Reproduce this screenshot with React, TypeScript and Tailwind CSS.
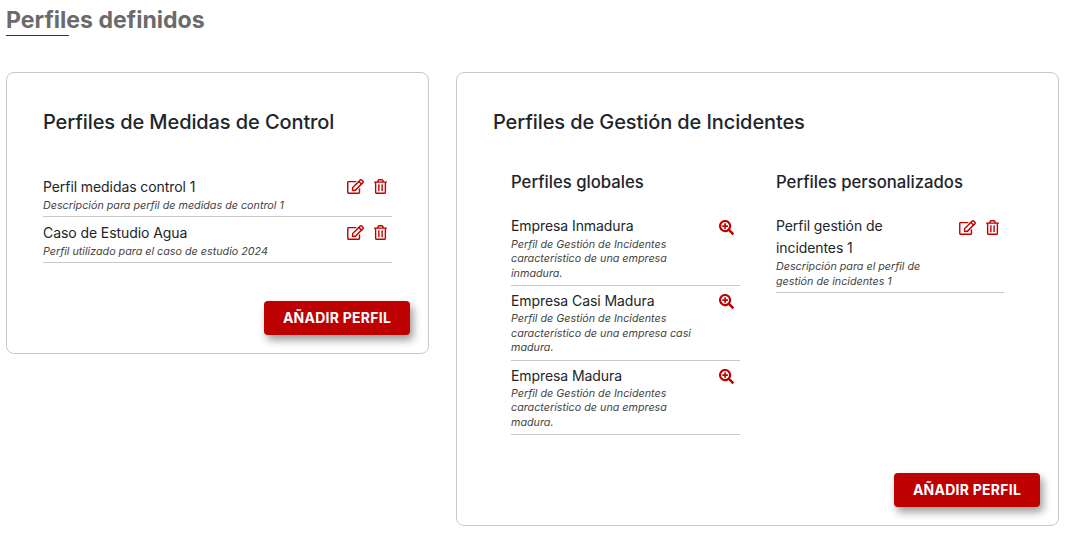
import { FaRegEdit, FaRegTrashAlt, FaSearchPlus } from "react-icons/fa";

function Actions({ top = "pt-[3px]" }: { top?: string }) {
  return (
    <div className={`flex gap-[10px] text-[#bd0000] text-[15px] shrink-0 ${top}`}>
      <FaRegEdit className="w-[17px] h-[15px]" />
      <FaRegTrashAlt className="w-[13px] h-[15px]" />
    </div>
  );
}

function Row({ title, desc, action, titleW = "", pad = "leading-[14.5px] pb-[4px]", head = "leading-[22px]" }: { title: string; desc: string; action: React.ReactNode; titleW?: string; pad?: string; head?: string }) {
  return (
    <div className="flex justify-between border-b border-[#c8c8c8]">
      <div className={titleW}>
        <div className={`text-[14px] tracking-[-0.08px] text-[#212529] ${head}`}>{title}</div>
        <div className={`text-[10.75px] italic text-[#444] ${pad}`}>{desc}</div>
      </div>
      {action}
    </div>
  );
}

function AddBtn() {
  return (
    <button className="bg-[#bd0000] text-white font-bold text-[14px] leading-[34px] h-[34px] w-[146px] rounded-[4px] shadow-[3px_5px_8px_rgba(0,0,0,0.4)] tracking-[0.25px]">
      AÑADIR PERFIL
    </button>
  );
}

const Zoom = (
  <div className="pr-[6px] pt-[4px] text-[#bd0000] shrink-0">
    <FaSearchPlus className="w-[15px] h-[15px]" />
  </div>
);

export default function App() {
  return (
    <div className="w-[1068px] h-[537px] bg-white font-['Inter',sans-serif] overflow-hidden px-[6px] pt-[5px]">
      <h1 className="text-[23.1px] leading-[30px] font-bold text-[#6b6b6b]">Perfiles definidos</h1>
      <div className="w-[63px] h-px bg-[#b00000]" />
      <div className="flex items-start gap-[27px] mt-[36px]">
        <section className="w-[423px] h-[282px] border border-[#c8c8c8] rounded-[8px] flex flex-col px-[36px] pt-[36px]">
          <h2 className="text-[20px] leading-[26px] font-medium tracking-[-0.1px] text-[#212529]">Perfiles de Medidas de Control</h2>
          <div className="mt-[41px] w-[349px] flex flex-col gap-[5px]">
            <Row pad="leading-[15px] pb-[3px]" title="Perfil medidas control 1" desc="Descripción para perfil de medidas de control 1" action={<div className="pr-[5px]"><Actions /></div>} />
            <Row pad="leading-[15px] pb-[3px]" title="Caso de Estudio Agua" desc="Perfil utilizado para el caso de estudio 2024" action={<div className="pr-[5px]"><Actions /></div>} />
          </div>
          <div className="flex justify-end mt-[38px] -mr-[18px]">
            <AddBtn />
          </div>
        </section>
        <section className="w-[603px] h-[454px] border border-[#c8c8c8] rounded-[8px] flex flex-col px-[36px] pt-[36px]">
          <h2 className="text-[20px] leading-[26px] font-medium tracking-[-0.1px] text-[#212529]">Perfiles de Gestión de Incidentes</h2>
          <div className="flex gap-[36px] ml-[18px] mt-[35px]">
            <div className="w-[229px]">
              <h3 className="text-[16.7px] leading-[24px] font-medium text-[#212529]">Perfiles globales</h3>
              <div className="mt-[21.5px] flex flex-col gap-[4px]">
                <Row titleW="w-[190px]" head="leading-[20px] pb-[2px]" title="Empresa Inmadura" desc="Perfil de Gestión de Incidentes característico de una empresa inmadura." action={Zoom} />
                <Row titleW="w-[190px]" title="Empresa Casi Madura" desc="Perfil de Gestión de Incidentes característico de una empresa casi madura." action={Zoom} />
                <Row titleW="w-[190px]" title="Empresa Madura" desc="Perfil de Gestión de Incidentes característico de una empresa madura." action={Zoom} />
              </div>
            </div>
            <div className="w-[228px]">
              <h3 className="text-[16.7px] leading-[24px] font-medium text-[#212529]">Perfiles personalizados</h3>
              <div className="mt-[21px]">
                <Row titleW="w-[160px]" pad="leading-[14.5px] pt-[1px] pb-[3px]" title="Perfil gestión de incidentes 1" desc="Descripción para el perfil de gestión de incidentes 1" action={<div className="pr-[5px]"><Actions top="pt-[5px]" /></div>} />
              </div>
            </div>
          </div>
          <div className="flex justify-end mt-auto mb-[18px] -mr-[18px]">
            <AddBtn />
          </div>
        </section>
      </div>
    </div>
  );
}
